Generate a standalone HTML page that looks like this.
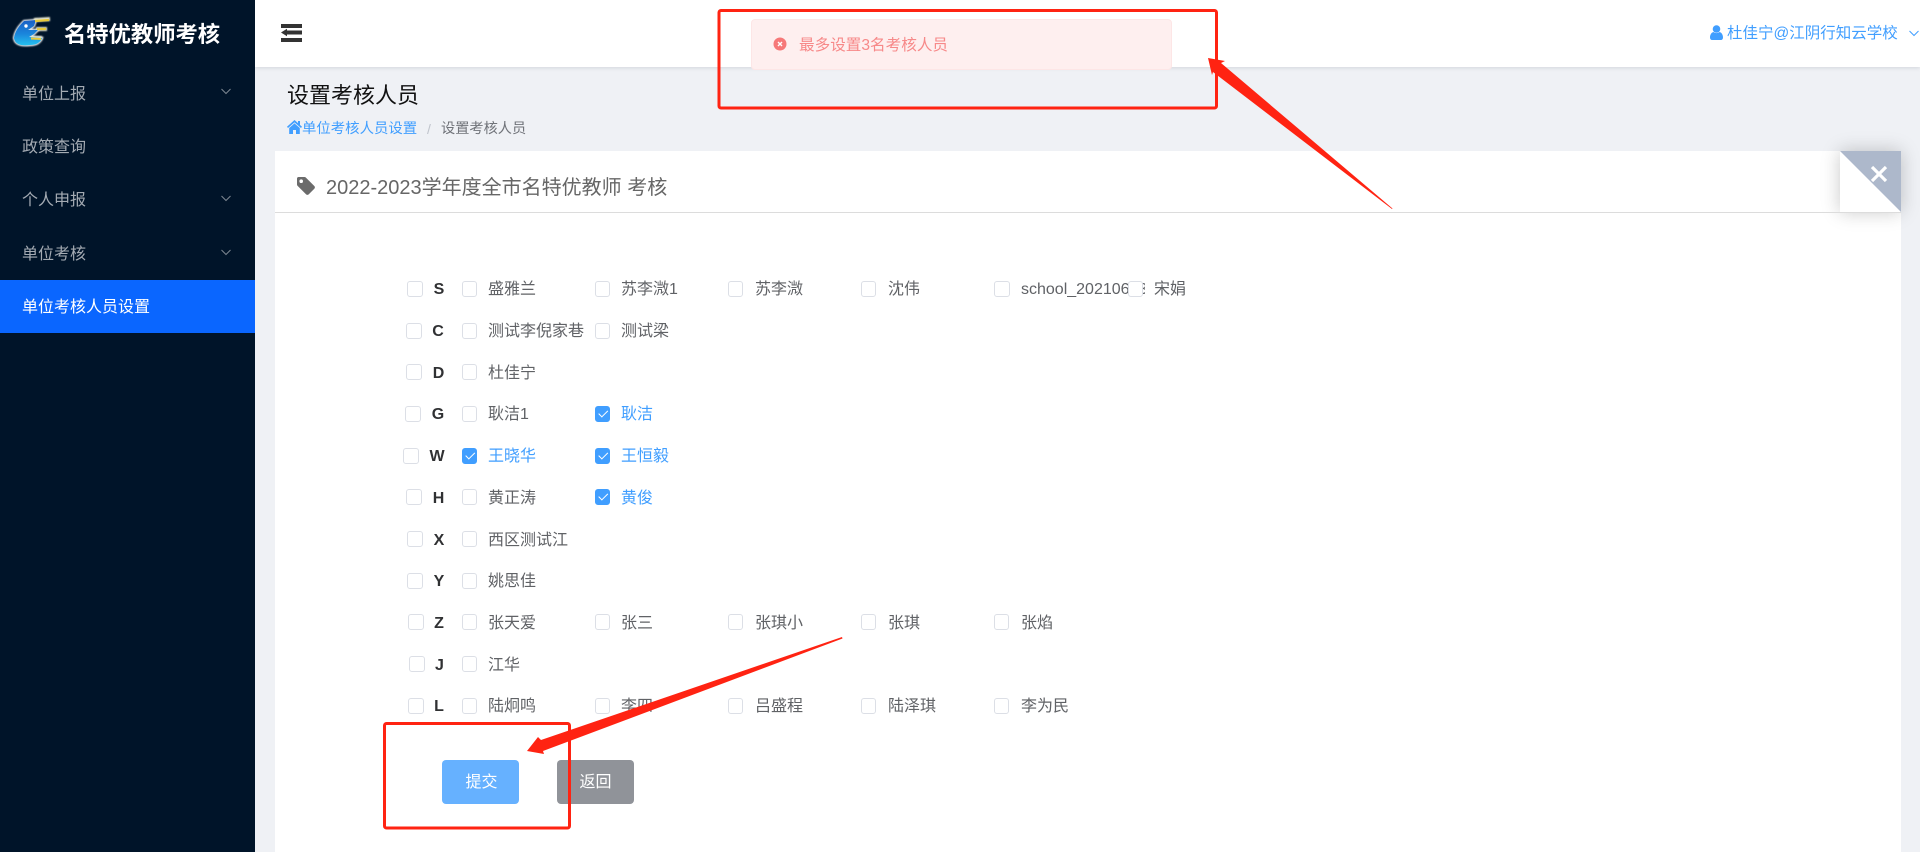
<!DOCTYPE html>
<html lang="zh-CN">
<head>
<meta charset="utf-8">
<title>设置考核人员</title>
<style>
*{box-sizing:border-box;margin:0;padding:0}
html,body{width:1920px;height:852px;overflow:hidden;background:#eff1f5;font-family:"Liberation Sans","Noto Sans CJK SC",sans-serif;position:relative}
.a{position:absolute;white-space:nowrap}
#side{position:absolute;left:0;top:0;width:255px;height:852px;background:#001429}
.m{position:absolute;left:22px;font-size:16px;line-height:24px;color:#a4abb3;white-space:nowrap}
#head{position:absolute;left:255px;top:0;width:1665px;height:67px;background:#fff;box-shadow:0 1px 4px rgba(0,21,41,.12)}
#card{position:absolute;left:275px;top:151px;width:1626px;height:701px;background:#fff}
#cardline{position:absolute;left:275px;top:212px;width:1626px;height:1px;background:#dcdcdc}
.r{position:absolute;left:0;width:1300px;height:16px}
.b{position:absolute;top:0;width:15px;height:16px;background:#fff;border:1px solid #dcdfe6;border-radius:3px}
.g{width:16px}
.b.on{background:#409eff;border-color:#409eff}
.b.on:after{content:"";position:absolute;left:4.5px;top:1px;width:3.5px;height:7.5px;border:1px solid #fff;border-top:0;border-left:0;transform:rotate(45deg)}
.l{position:absolute;top:-3px;width:24px;margin-left:-12px;text-align:center;font-size:16px;line-height:24px;font-weight:700;color:#303133}
.t{position:absolute;top:-3px;font-size:16px;line-height:24px;color:#606266;white-space:nowrap}
.x .t,.x .l{top:-2px}
.t.on{color:#409eff}
.btn{position:absolute;top:760px;width:77px;height:44px;border-radius:4px;color:#fff;font-size:16px;line-height:46px;text-align:center}
</style>
</head>
<body>
<div id="head"></div>
<div id="side">
  <svg class="a" style="left:10px;top:14px" width="46" height="36" viewBox="10 14 46 36">
    <defs>
      <linearGradient id="lg" x1="0" y1="0" x2="0" y2="1"><stop offset="0" stop-color="#1a5fc4"/><stop offset=".55" stop-color="#1a86dc"/><stop offset="1" stop-color="#25c0ee"/></linearGradient>
      <filter id="bl" x="-20%" y="-20%" width="140%" height="140%"><feGaussianBlur stdDeviation=".9"/></filter>
    </defs>
    <path d="M14 38C15 31 19 26 24 21L36 20L34 26L28 30L38 30L34 34L29 37L42 38C40 43 36 45 30 45C22 46 15 45 14 38Z" fill="#dfe4e8" stroke="#dfe4e8" stroke-width="2.400" filter="url(#bl)"/>
    <path d="M34 20L50 19M36 29L47 29M30 38L42 38" stroke="#e6e6d0" stroke-width="4" filter="url(#bl)"/>
    <path d="M14 38C15 31 19 26 24 21L36 20L34 26L28 30L38 30L34 34L29 37L42 38C40 43 36 45 30 45C22 46 15 45 14 38Z" fill="url(#lg)"/>
    <path d="M35 21L49 20" stroke="#e8c93a" stroke-width="2.200"/>
    <path d="M37 29L46 29" stroke="#e8c93a" stroke-width="2.200"/>
    <path d="M31 38.500L41 39" stroke="#e8c93a" stroke-width="2"/>
    <circle cx="26" cy="26" r="1.700" fill="#fff"/>
  </svg>
  <div class="a" style="left:64px;top:19px;font-size:22.300px;line-height:32px;font-weight:700;color:#fff">名特优教师考核</div>
  <div class="m" style="top:83px">单位上报</div>
  <div class="m" style="top:136px">政策查询</div>
  <div class="m" style="top:189px">个人申报</div>
  <div class="m" style="top:243px">单位考核</div>
  <svg class="a" style="left:221px;top:88px" width="10" height="7"><path d="M.5 1L5 5.500L9.500 1" fill="none" stroke="#7d8792"/></svg>
  <svg class="a" style="left:221px;top:195px" width="10" height="7"><path d="M.5 1L5 5.500L9.500 1" fill="none" stroke="#7d8792"/></svg>
  <svg class="a" style="left:221px;top:249px" width="10" height="7"><path d="M.5 1L5 5.500L9.500 1" fill="none" stroke="#7d8792"/></svg>
  <div class="a" style="left:0;top:280px;width:255px;height:53px;background:#0a66ff"></div>
  <div class="m" style="top:296px;color:#fff">单位考核人员设置</div>
</div>

<svg class="a" style="left:281px;top:24px" width="21" height="18" viewBox="0 0 21 18" fill="#333">
  <rect x="0" y="0" width="21" height="4"/><rect x="6" y="6.500" width="15" height="4"/><rect x="0" y="14" width="21" height="4"/>
  <path d="M0 8.500L6 4.800V12.200Z"/>
</svg>

<svg class="a" style="left:1710px;top:25px" width="13" height="15" viewBox="0 0 13 15" fill="#409eff"><circle cx="6.500" cy="4" r="3.800"/><path d="M0 12.500C0 9.500 1.500 7.500 3.500 7C5.500 8.500 7.500 8.500 9.500 7C11.500 7.500 13 9.500 13 12.500C13 14.200 12 15 11 15H2C1 15 0 14.200 0 12.500Z"/></svg>
<div class="a" style="left:1727px;top:22px;font-size:15.500px;line-height:24px;color:#409eff">杜佳宁@江阴行知云学校</div>
<svg class="a" style="left:1909px;top:30px" width="10" height="7"><path d="M.5 1L5 5.500L9.500 1" fill="none" stroke="#409eff"/></svg>

<div class="a" style="left:287px;top:80px;font-size:22px;line-height:32px;color:#111">设置考核人员</div>
<svg class="a" style="left:287px;top:120px" width="15" height="14" viewBox="0 0 15 14" fill="#409eff"><path d="M7.500 0L15 6.700L14 8L7.500 2.400L1 8L0 6.700Z"/><path d="M2.200 8L7.500 3.400L12.800 8V14H9V10H6V14H2.200Z"/><rect x="11" y="1" width="2" height="4"/></svg>
<div class="a" style="left:302px;top:117px;font-size:14.400px;line-height:24px;color:#409eff">单位考核人员设置</div>
<div class="a" style="left:427px;top:117px;font-size:14px;line-height:24px;color:#c0c4cc">/</div>
<div class="a" style="left:441px;top:117px;font-size:14.200px;line-height:24px;color:#707379">设置考核人员</div>

<div id="card"></div>
<div class="a" style="left:1840px;top:151px;width:61px;height:61px;box-shadow:0 0 18px rgba(0,0,0,.22)"></div>
<div id="cardline"></div>
<svg class="a" style="left:1840px;top:151px" width="61" height="62" viewBox="0 0 61 62">
  <rect width="61" height="61" fill="#fff"/>
  <path d="M0 0H61V61Z" fill="#adb8cb"/>
  <path d="M32 16L46 30M46 16L32 30" stroke="#fff" stroke-width="3.200" fill="none"/>
</svg>
<svg class="a" style="left:297px;top:177px" width="18" height="18" viewBox="0 0 18 18" fill="#6b6b6b"><path d="M0 1.500C0 .7 .7 0 1.500 0H7.500C8 0 8.500 .2 8.900 .6L17.300 9C18.100 9.800 18.100 11 17.300 11.800L11.800 17.300C11 18.100 9.800 18.100 9 17.300L.6 8.900C.2 8.500 0 8 0 7.500ZM4.200 2.400A1.800 1.800 0 1 0 4.200 6A1.800 1.800 0 1 0 4.200 2.400Z" fill-rule="evenodd"/></svg>
<div class="a" style="left:326px;top:173px;font-size:20px;line-height:30px;color:#666">2022-2023学年度全市名特优教师 考核</div>

<div class="r" style="top:281px"><i class="b g" style="left:407px"></i><b class="l" style="left:439px">S</b>
  <i class="b" style="left:462px"></i><span class="t" style="left:488px">盛雅兰</span>
  <i class="b" style="left:595px"></i><span class="t" style="left:621px">苏李溦1</span>
  <i class="b" style="left:728px"></i><span class="t" style="left:755px">苏李溦</span>
  <i class="b" style="left:861px"></i><span class="t" style="left:888px">沈伟</span>
  <span class="t" style="left:1021px;width:124px;overflow:hidden">school_20210623</span><i class="b g" style="left:994px"></i>
  <i class="b" style="left:1128px"></i><span class="t" style="left:1154px">宋娟</span></div>
<div class="r" style="top:323px"><i class="b g" style="left:406px"></i><b class="l" style="left:438px">C</b>
  <i class="b" style="left:462px"></i><span class="t" style="left:488px">测试李倪家巷</span>
  <i class="b" style="left:595px"></i><span class="t" style="left:621px">测试梁</span></div>
<div class="r x" style="top:364px"><i class="b g" style="left:406px"></i><b class="l" style="left:438.500px">D</b>
  <i class="b" style="left:462px"></i><span class="t" style="left:488px">杜佳宁</span></div>
<div class="r" style="top:406px"><i class="b g" style="left:405px"></i><b class="l" style="left:438px">G</b>
  <i class="b" style="left:462px"></i><span class="t" style="left:488px">耿洁1</span>
  <i class="b on" style="left:595px"></i><span class="t on" style="left:621px">耿洁</span></div>
<div class="r" style="top:448px"><i class="b g" style="left:403px"></i><b class="l" style="left:437px">W</b>
  <i class="b on" style="left:462px"></i><span class="t on" style="left:488px">王晓华</span>
  <i class="b on" style="left:595px"></i><span class="t on" style="left:621px">王恒毅</span></div>
<div class="r x" style="top:489px"><i class="b g" style="left:406px"></i><b class="l" style="left:438.500px">H</b>
  <i class="b" style="left:462px"></i><span class="t" style="left:488px">黄正涛</span>
  <i class="b on" style="left:595px"></i><span class="t on" style="left:621px">黄俊</span></div>
<div class="r x" style="top:531px"><i class="b g" style="left:407px"></i><b class="l" style="left:439px">X</b>
  <i class="b" style="left:462px"></i><span class="t" style="left:488px">西区测试江</span></div>
<div class="r" style="top:573px"><i class="b g" style="left:407px"></i><b class="l" style="left:439px">Y</b>
  <i class="b" style="left:462px"></i><span class="t" style="left:488px">姚思佳</span></div>
<div class="r x" style="top:614px"><i class="b g" style="left:408px"></i><b class="l" style="left:439px">Z</b>
  <i class="b" style="left:462px"></i><span class="t" style="left:488px">张天爱</span>
  <i class="b" style="left:595px"></i><span class="t" style="left:621px">张三</span>
  <i class="b" style="left:728px"></i><span class="t" style="left:755px">张琪小</span>
  <i class="b" style="left:861px"></i><span class="t" style="left:888px">张琪</span>
  <i class="b" style="left:994px"></i><span class="t" style="left:1021px">张焰</span></div>
<div class="r x" style="top:656px"><i class="b g" style="left:409px"></i><b class="l" style="left:439.500px">J</b>
  <i class="b" style="left:462px"></i><span class="t" style="left:488px">江华</span></div>
<div class="r" style="top:698px"><i class="b g" style="left:408px"></i><b class="l" style="left:439px">L</b>
  <i class="b" style="left:462px"></i><span class="t" style="left:488px">陆炯鸣</span>
  <i class="b" style="left:595px"></i><span class="t" style="left:621px">李四</span>
  <i class="b" style="left:728px"></i><span class="t" style="left:755px">吕盛程</span>
  <i class="b" style="left:861px"></i><span class="t" style="left:888px">陆泽琪</span>
  <i class="b" style="left:994px"></i><span class="t" style="left:1021px">李为民</span></div>

<div class="btn" style="left:442px;background:#66b1ff;padding-left:2px">提交</div>
<div class="btn" style="left:557px;background:#909399">返回</div>

<div class="a" style="left:751px;top:19px;width:421px;height:51px;background:#feefef;border:1px solid #fde6e6;border-radius:4px"></div>
<svg class="a" style="left:773px;top:37px" width="14" height="14" viewBox="0 0 14 14"><circle cx="7" cy="7" r="6.500" fill="#f67878"/><path d="M5 5L9 9M9 5L5 9" stroke="#fff" stroke-width="1.400"/></svg>
<div class="a" style="left:799px;top:34px;font-size:15.600px;line-height:24px;color:#f78989">最多设置3名考核人员</div>

<svg class="a" style="left:0;top:0" width="1920" height="852" viewBox="0 0 1920 852" fill="#ff2312">
  <rect x="719" y="10.500" width="497.500" height="97.500" rx="2" fill="none" stroke="#ff2312" stroke-width="3" stroke-linejoin="round"/>
  <rect x="384.500" y="723.500" width="185" height="104.500" rx="2" fill="none" stroke="#ff2312" stroke-width="3" stroke-linejoin="round"/>
  <path d="M1208 58L1225 61L1221 63L1392.500 208.500L1392 209L1213 72L1212 75Z"/>
  <path d="M842 637L842.500 638.500L543 751L544 754L527 751L538 737L541 740Z"/>
</svg>
</body>
</html>
